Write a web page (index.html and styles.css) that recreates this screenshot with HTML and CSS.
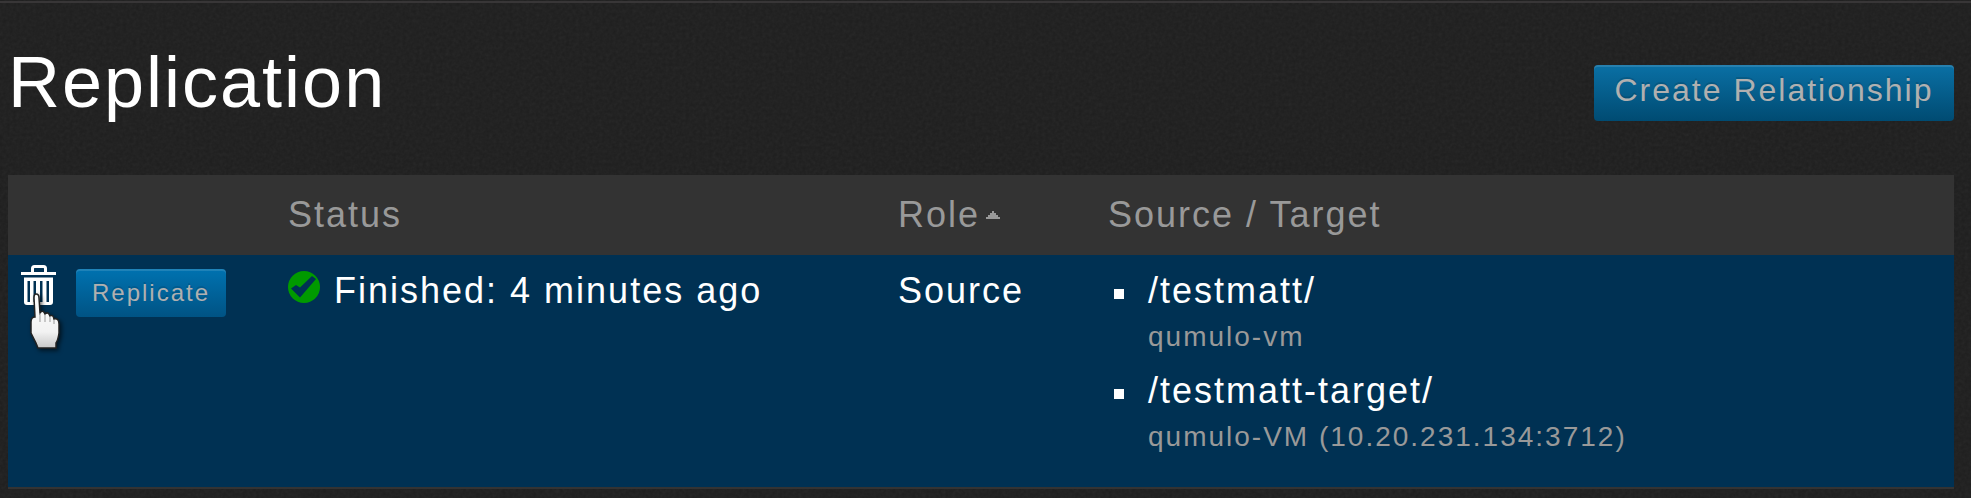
FILE: index.html
```html
<!DOCTYPE html>
<html lang="en">
<head>
<meta charset="utf-8">
<title>Replication</title>
<link rel="stylesheet" href="styles.css">
</head>
<body>
<svg class="grain" aria-hidden="true">
  <filter id="noise"><feTurbulence type="fractalNoise" baseFrequency="0.3" numOctaves="2" stitchTiles="stitch"/><feColorMatrix type="saturate" values="0"/></filter>
  <rect width="100%" height="100%" filter="url(#noise)"/>
</svg>
<main class="page">
  <header class="page-header">
    <h1 class="title">Replication</h1>
    <button class="btn btn-create">Create Relationship</button>
  </header>
  <section class="table">
    <div class="row head">
      <span></span>
      <span>Status</span>
      <span class="sortable">Role<svg class="caret" viewBox="0 0 14 8"><path d="M0 8V6H2V4H4V2H6V0H8V2H10V4H12V6H14V8Z"/></svg></span>
      <span>Source / Target</span>
    </div>
    <div class="row body">
      <div class="actions">
        <svg class="trash" viewBox="0 0 36 40"><path class="line" d="M11.500 7V3.500Q11.500 1.500 13.500 1.500H22.500Q24.500 1.500 24.500 3.500V7"/><path d="M0 7H35V10H0Z"/><path fill-rule="evenodd" d="M3 12.500H32V37Q32 40 29 40H6Q3 40 3 37ZM6.500 16V37H9V16ZM12.500 16V37H15V16ZM19 16V37H21.500V16ZM25.500 16V37H28V16Z"/></svg>
        <button class="btn btn-small">Replicate</button>
        <svg class="cursor" viewBox="0 0 38 62"><defs><linearGradient id="hand" x1="0" y1="0" x2="0" y2="1"><stop offset="0" stop-color="#fff"/><stop offset=".7" stop-color="#f2f2f2"/><stop offset="1" stop-color="#c8c8c8"/></linearGradient></defs><path class="shape" d="M8 3Q11 3 11 7L12 22Q15 18 17 23Q20 20 22 25Q25 23 26 28Q31 27 31 33V42Q30 49 28 52V57H10L8 52L3 42V31Q3 26 7 26L6 7Q6 3 8 3Z"/><path class="fold" d="M12 22V31M17 24V31M22 26V31M26 29V33"/></svg>
      </div>
      <div class="status"><svg class="check" viewBox="0 0 32 32"><circle cx="16" cy="16" r="16"/><path d="M3 17.500L8 14L12 16.500L24 5L28 8L12 26.500Z"/></svg><span>Finished: 4 minutes ago</span></div>
      <div>Source</div>
      <ul class="paths">
        <li>/testmatt/<small>qumulo-vm</small></li>
        <li>/testmatt-target/<small>qumulo-VM (10.20.231.134:3712)</small></li>
      </ul>
    </div>
  </section>
</main>
</body>
</html>
```
FILE: styles.css
```css
* { box-sizing: border-box; }
body { margin: 0; height: 498px; overflow: hidden; background: #1e1e1e; color: #fff; font: 36px/40px "Liberation Sans", Arial, sans-serif; letter-spacing: 2px; }
.grain { position: absolute; inset: 0; width: 100%; height: 498px; opacity: .06; }
.page { position: relative; margin-top: 1px; border-top: 2px solid #383637; padding: 0 17px 0 8px; }
.page-header { display: flex; justify-content: space-between; align-items: flex-start; height: 172px; }
.title { margin: 38px 0 0; font-size: 72px; line-height: 82px; font-weight: 400; }
.btn { border: 0; padding: 0; border-radius: 4px; color: #b0b0b0; font-family: inherit; letter-spacing: 2px; text-align: center; white-space: nowrap; text-shadow: 0 -2px 0 rgba(0,0,0,.12); background: linear-gradient(#0a70a5, #004b72); box-shadow: inset 0 2px 0 rgba(255,255,255,.12); }
.btn-create { width: 360px; height: 56px; margin-top: 62px; padding-bottom: 6px; font-size: 32px; line-height: 50px; }
.btn-small { width: 150px; height: 48px; font-size: 24px; line-height: 48px; background: linear-gradient(#0072b0, #005384); }
.row { display: grid; grid-template-columns: 280px 610px 210px 1fr; }
.head { height: 80px; padding-top: 20px; background: #333; color: #999; }
.body { height: 234px; padding-top: 16px; background: #003153; border-bottom: 2px solid #333; }
.caret { width: 14px; height: 8px; margin-left: 6px; fill: #999; vertical-align: 8px; }
.actions { position: relative; display: flex; align-items: flex-start; padding-left: 13px; margin-top: -2px; }
.trash { width: 36px; height: 40px; margin-top: -4px; fill: #fff; }
.trash .line { fill: none; stroke: #fff; stroke-width: 3; }
.btn-small { margin-left: 19px; }
.cursor { position: absolute; left: 20px; top: 22px; width: 38px; height: 62px; filter: drop-shadow(2px 2px 2px rgba(0,0,0,.6)); }
.cursor .shape { fill: url(#hand); stroke: #222; stroke-width: 1.5; }
.cursor .fold { fill: none; stroke: #999; stroke-width: 1; }
.status { display: flex; align-items: flex-start; }
.check { width: 32px; height: 32px; margin: 0 14px 0 0; fill: #009a00; }
.check path { fill: #003153; }
.paths { margin: 0; padding: 0 0 0 40px; list-style: none; }
.paths li { display: flex; flex-direction: column; position: relative; height: 100px; }
.paths li::before { content: ""; position: absolute; left: -34px; top: 18px; width: 10px; height: 10px; background: #fff; }
.paths small { font-size: 28px; line-height: 32px; margin-top: 10px; color: #999; }
```
